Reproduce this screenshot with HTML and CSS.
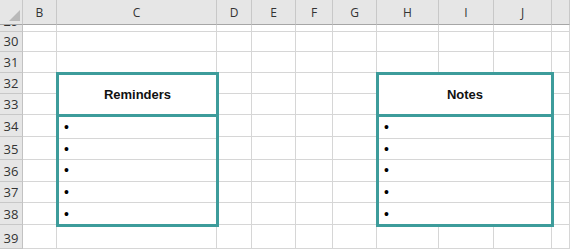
FILE: index.html
```html
<!DOCTYPE html>
<html lang="en">
<head>
    <meta charset="UTF-8">
    <meta name="viewport" content="width=device-width, initial-scale=1.0">
    <title>sheet</title>
    <link rel="stylesheet" href="styles.css">
</head>
<body>
<div class="sheet">
    <div class="cells" id="cells"></div>

    <div class="overlay">
        <div class="box reminders">
            <div class="box-title">Reminders</div>
            <div class="box-line">•</div>
            <div class="box-line">•</div>
            <div class="box-line">•</div>
            <div class="box-line">•</div>
            <div class="box-line">•</div>
        </div>
        <div class="box notes">
            <div class="box-title">Notes</div>
            <div class="box-line">•</div>
            <div class="box-line">•</div>
            <div class="box-line">•</div>
            <div class="box-line">•</div>
            <div class="box-line">•</div>
        </div>
    </div>
</div>

<script src="script.js"></script>
</body>
</html>
```

FILE: styles.css
```css
body{
    margin: 0;
    background: #fff;
    overflow: hidden;
    font-family: "Liberation Sans", Arial, sans-serif;
}
.sheet{
    position: relative;
    width: 570px;
    height: 250px;
}
.cells, .overlay{
    display: grid;
    grid-template-columns: 23px 34px 160px 35px 44px 37px 44px 62px 55px 58px 18px;
    grid-template-rows: 25px 7px 20px 21px 21px 21px 22px 23px 22px 21px 22px 24px;
}
.overlay{
    position: absolute;
    inset: 0;
}
.cell{
    box-sizing: border-box;
    border-right: 1px solid #d6d6d6;
    border-bottom: 1px solid #d6d6d6;
}
.col-head{
    background: #e6e6e6;
    border-right-color: #c8c8c8;
    border-bottom-color: #a6a6a6;
    display: flex;
    align-items: center;
    justify-content: center;
    font-family: "Open Sans", sans-serif;
    font-size: 12px;
    color: #333;
}
.row-head{
    background: #e6e6e6;
    border-right-color: #c2c2c2;
    border-bottom-color: #c8c8c8;
    display: flex;
    align-items: flex-end;
    justify-content: center;
    overflow: hidden;
    font-family: "Open Sans", sans-serif;
    font-size: 13px;
    color: #333;
}
.row-head span{
    line-height: 20px;
    flex-shrink: 0;
}
.corner{
    background: #e6e6e6;
    border-right-color: #c8c8c8;
    border-bottom-color: #a6a6a6;
}
.corner svg{
    display: block;
}

/* teal boxes */
.box{
    display: flex;
    flex-direction: column;
    background: #fff;
    border: 3px solid #3d9c9b;
    z-index: 1;
}
.reminders{
    grid-column: 3;
    grid-row: 5 / 12;
    margin: -1px -2px -2px -1px;
}
.notes{
    grid-column: 8 / 11;
    grid-row: 5 / 12;
    margin: -1px -2px -2px -1px;
}
.box-title{
    height: 39px;
    flex-shrink: 0;
    border-bottom: 3px solid #3d9c9b;
    display: flex;
    align-items: center;
    justify-content: center;
    font-weight: bold;
    font-size: 13px;
    color: #111;
}
.box-line{
    flex: 1;
    border-bottom: 1px solid #d6d6d6;
    display: flex;
    align-items: center;
    padding-left: 5px;
    font-size: 14px;
    color: #000;
}
.box-line:last-child{
    border-bottom: none;
}
```

FILE: script.js
```js
const cells = document.getElementById('cells')
const letters = ['B', 'C', 'D', 'E', 'F', 'G', 'H', 'I', 'J', '']

// header row
let tag = ''
tag += '<div class="cell corner"><svg width="22" height="24"><polygon points="9,21 20,21 20,10" fill="#b9b9b9"/></svg></div>'
letters.forEach(l => {
    tag += `<div class="cell col-head">${l}</div>`
})

// rows 29 ~ 39
for (let r = 29; r <= 39; r++) {
    tag += `<div class="cell row-head"><span>${r}</span></div>`
    letters.forEach(() => {
        tag += '<div class="cell"></div>'
    })
}
cells.innerHTML = tag
```
